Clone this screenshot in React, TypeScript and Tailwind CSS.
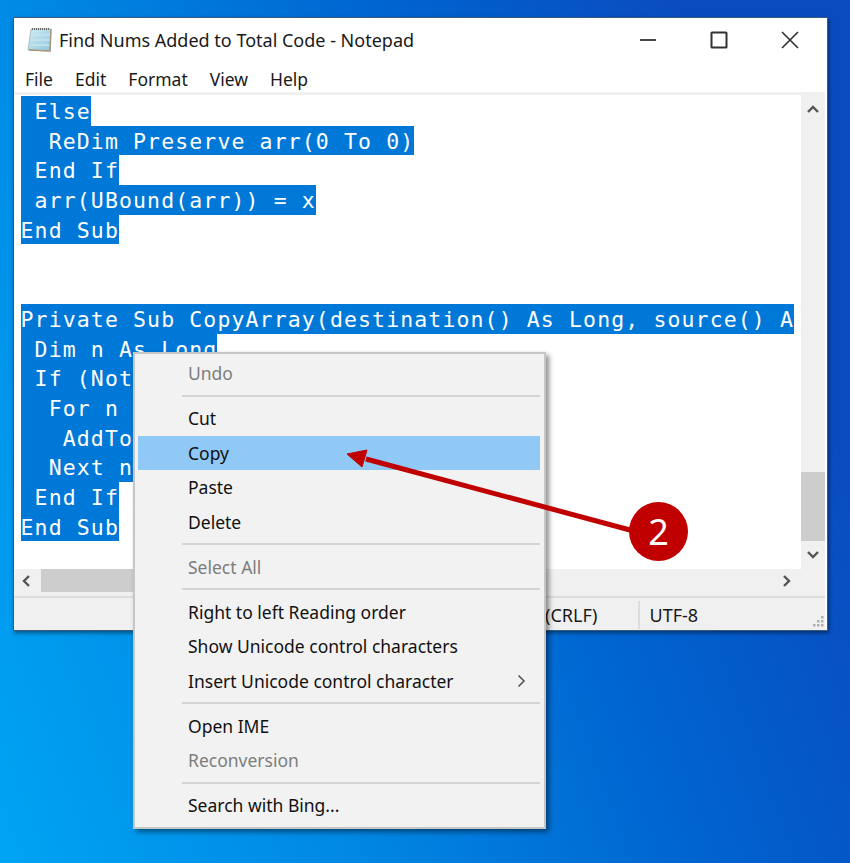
const CODE_TOP = ["\u00a0Else", "\u00a0\u00a0ReDim Preserve arr(0 To 0)", "\u00a0End If", "\u00a0arr(UBound(arr)) = x", "End Sub"];
const CODE_BOTTOM = [
  "Private Sub CopyArray(destination() As Long, source() A",
  "\u00a0Dim n As Long",
  "\u00a0If (Not\u00a0",
  "\u00a0\u00a0For n\u00a0\u00a0",
  "\u00a0\u00a0\u00a0AddTo\u00a0",
  "\u00a0\u00a0Next n\u00a0",
  "\u00a0End If",
  "End Sub",
];

const CodeLine = ({ text }: { text: string }) => (
  <div className="h-[29.7px] leading-[31.5px]">
    <span className="inline-block h-[29.7px] bg-[#0078d7] text-white">{text}</span>
  </div>
);

const MenuItem = ({ label, disabled, active, arrow }: { label: string; disabled?: boolean; active?: boolean; arrow?: boolean }) => (
  <div
    className={`ml-[3px] mr-[4px] flex h-[34.5px] items-center justify-between pl-[50px] pr-[14px] ${
      active ? "bg-[#90c8f6]" : ""
    } ${disabled ? "text-[#7d7d7d]" : "text-[#111]"}`}
  >
    <span>{label}</span>
    {arrow && (
      <svg width="9" height="14" viewBox="0 0 9 14" fill="none" stroke="#555" strokeWidth="1.6">
        <path d="M1.5 1.5 7 7 1.5 12.5" />
      </svg>
    )}
  </div>
);

const MenuSep = () => <div className="my-[4.25px] ml-[47px] mr-[4px] h-[2px] bg-[#d4d4d4]" />;

export default function App() {
  return (
    <div className="relative h-[863px] w-[850px] overflow-hidden bg-[linear-gradient(70deg,#00a4f4_0%,#0088e4_30%,#0064d0_60%,#0a4cc0_85%)] font-['Noto_Sans',sans-serif]">
      {/* notepad window */}
      <div className="absolute left-[13px] top-[17px] flex h-[614px] w-[815px] flex-col border border-[#3a5a80] bg-white pr-[2px] shadow-[1px_2px_4px_rgba(0,0,0,0.45)]">
        <div className="flex h-[44px] shrink-0 items-center">
          <svg className="ml-[13px]" width="26" height="26" viewBox="0 0 26 26">
            <defs>
              <linearGradient id="pad" x1="0" y1="0" x2="1" y2="1">
                <stop offset="0" stopColor="#d3ecf4" />
                <stop offset="1" stopColor="#8fc6dc" />
              </linearGradient>
            </defs>
            <path d="M4 2h20l-1 22-22-1z" fill="url(#pad)" stroke="#9ab4bd" strokeWidth="0.8" />
            <path d="M3.5 8h19.5M3 13h20M2.5 18h20" stroke="#c6e4ee" strokeWidth="1.5" />
            <path d="M24 2l-1 22-21-1" stroke="#a8957a" strokeWidth="1.5" fill="none" />
            <path d="M5 2h17" stroke="#666" strokeWidth="2" strokeDasharray="1 1" />
          </svg>
          <span className="ml-[6px] text-[18px] text-[#1a1a1a]">Find Nums Added to Total Code - Notepad</span>
          <div className="ml-auto flex items-center">
            <svg width="18" height="18" viewBox="0 0 18 18" stroke="#333" strokeWidth="1.8" fill="none" className="mr-[53px]">
              <path d="M1 9h16" />
            </svg>
            <svg width="18" height="18" viewBox="0 0 18 18" stroke="#333" strokeWidth="2" fill="none" className="mr-[53px]">
              <rect x="1.5" y="1.5" width="15" height="15" rx="0.5" />
            </svg>
            <svg width="18" height="18" viewBox="0 0 18 18" stroke="#333" strokeWidth="1.7" fill="none" className="mr-[26px]">
              <path d="M1 1l16 16M17 1 1 17" />
            </svg>
          </div>
        </div>

        <div className="flex h-[30px] shrink-0 items-center gap-[22px] pl-[11px] pt-[4px] text-[17.5px] text-[#1a1a1a]">
          <span>File</span>
          <span>Edit</span>
          <span>Format</span>
          <span>View</span>
          <span>Help</span>
        </div>

        <div className="h-[3px] shrink-0 bg-[#f0f0f0]" />

        <div className="flex min-h-0 flex-1">
          <div className="w-[787px] overflow-hidden pl-[6.5px] pt-[1px] font-['DejaVu_Sans_Mono',monospace] text-[21.5px] tracking-[1.12px] whitespace-pre">
            {CODE_TOP.map((t, i) => (
              <CodeLine key={i} text={t} />
            ))}
            <div className="h-[59.4px]" />
            {CODE_BOTTOM.map((t, i) => (
              <CodeLine key={i} text={t} />
            ))}
          </div>
          {/* vertical scrollbar */}
          <div className="flex w-[24px] flex-col items-center bg-[#f0f0f0] pt-[10px]">
            <svg width="12" height="8" viewBox="0 0 12 8" fill="none" stroke="#555" strokeWidth="2.4">
              <path d="M1 7l5-5 5 5" />
            </svg>
            <div className="mt-[359px] h-[69px] w-[24px] bg-[#cdcdcd]" />
            <svg className="mt-[10px]" width="12" height="8" viewBox="0 0 12 8" fill="none" stroke="#555" strokeWidth="2.4">
              <path d="M1 1l5 5 5-5" />
            </svg>
          </div>
        </div>

        {/* horizontal scrollbar */}
        <div className="flex h-[27px] shrink-0 items-start bg-[#f0f0f0]">
          <svg className="ml-[8px] mt-[6px]" width="8" height="12" viewBox="0 0 8 12" fill="none" stroke="#555" strokeWidth="2.4">
            <path d="M7 1 2 6l5 5" />
          </svg>
          <div className="ml-[11px] h-[23px] w-[100px] bg-[#cdcdcd]" />
          <svg className="ml-auto mr-[34px] mt-[6px]" width="8" height="12" viewBox="0 0 8 12" fill="none" stroke="#555" strokeWidth="2.4">
            <path d="M1 1l5 5-5 5" />
          </svg>
        </div>

        {/* status bar */}
        <div className="relative flex h-[34px] shrink-0 items-center border-t-2 border-[#dcdcdc] bg-[#f0f0f0] pt-[2px] text-[18px] text-[#1a1a1a]">
          <span className="ml-[531px]">(CRLF)</span>
          <div className="ml-[40px] h-[28px] w-[2px] bg-[#dcdcdc]" />
          <span className="ml-[10px]">UTF-8</span>
          <svg className="absolute bottom-[2px] right-[0px]" width="14" height="14" viewBox="0 0 14 14" fill="#b0b0b0">
            <rect x="10" y="2" width="2.5" height="2.5" />
            <rect x="6" y="6" width="2.5" height="2.5" />
            <rect x="10" y="6" width="2.5" height="2.5" />
            <rect x="2" y="10" width="2.5" height="2.5" />
            <rect x="6" y="10" width="2.5" height="2.5" />
            <rect x="10" y="10" width="2.5" height="2.5" />
          </svg>
        </div>
      </div>

      {/* context menu */}
      <div className="absolute left-[133px] top-[352px] h-[477px] w-[413px] border-2 border-[#c6c6c6] bg-[#f2f2f2] pt-[2px] text-[17.5px] shadow-[3px_3px_5px_rgba(0,0,0,0.45)]">
        <MenuItem label="Undo" disabled />
        <MenuSep />
        <MenuItem label="Cut" />
        <MenuItem label="Copy" active />
        <MenuItem label="Paste" />
        <MenuItem label="Delete" />
        <MenuSep />
        <MenuItem label="Select All" disabled />
        <MenuSep />
        <MenuItem label="Right to left Reading order" />
        <MenuItem label="Show Unicode control characters" />
        <MenuItem label="Insert Unicode control character" arrow />
        <MenuSep />
        <MenuItem label="Open IME" />
        <MenuItem label="Reconversion" disabled />
        <MenuSep />
        <MenuItem label="Search with Bing..." />
      </div>

      {/* annotation arrow */}
      <svg className="absolute left-0 top-0" width="850" height="863" viewBox="0 0 850 863">
        <path d="M630 530 366 459" stroke="#c00000" strokeWidth="5" />
        <path d="M347 454 367 450 362 467 Z" fill="#c00000" stroke="#c00000" strokeWidth="1" />
      </svg>
      <div className="absolute left-[629px] top-[502px] flex h-[59px] w-[59px] items-center justify-center rounded-full bg-[#c00000] text-[36px] text-white">
        2
      </div>
    </div>
  );
}
